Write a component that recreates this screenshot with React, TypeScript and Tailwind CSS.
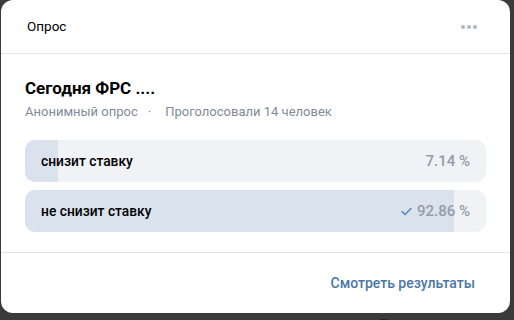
import React from "react";

function Option({ label, pct, fill, voted }: { label: string; pct: string; fill: number; voted?: boolean }) {
  return (
    <div className="relative h-[42px] rounded-[10px] bg-[#f0f2f5] overflow-hidden">
      <div className="absolute left-0 top-0 bottom-0 bg-[#dae2ed]" style={{ width: fill }} />
      <div className="relative h-full flex items-center justify-between pl-4 pr-4">
        <span className="text-[13.8px] font-medium text-black">{label}</span>
        <span className="flex items-center gap-[5px] text-[15px] font-medium text-[#939cab]">
          {voted && (
            <svg width="11" height="9" viewBox="0 0 11 9" fill="none">
              <path d="M1 4.5 L4 7.5 L10 1.5" stroke="#5181b8" strokeWidth="1.5" strokeLinecap="round" strokeLinejoin="round" />
            </svg>
          )}
          {pct}
        </span>
      </div>
    </div>
  );
}

export default function App() {
  return (
    <div className="w-[514px] h-[320px] bg-[#3a3a3a] overflow-hidden relative" style={{ fontFamily: "Roboto, 'Liberation Sans', sans-serif" }}>
      <div className="ml-[1px] w-[509px] h-[313px] bg-white rounded-[12px] flex flex-col">
        <div className="h-[54px] flex items-center justify-between pl-[26px] pr-[33px] border-b border-[#e1e5eb]">
          <span className="text-[13.5px] text-black">Опрос</span>
          <div className="flex gap-[2px]">
            <span className="w-[4px] h-[4px] rounded-full bg-[#aeb7c2]" />
            <span className="w-[4px] h-[4px] rounded-full bg-[#aeb7c2]" />
            <span className="w-[4px] h-[4px] rounded-full bg-[#aeb7c2]" />
          </div>
        </div>
        <div className="px-[24px] pt-[23px] pb-[20px] border-b border-[#e1e5eb]">
          <div className="text-[17px] font-bold text-black leading-[22px]">Сегодня ФРС ....</div>
          <div className="mt-[4px] text-[13px] text-[#818c99] leading-[18px] flex">
            <span>Анонимный опрос</span>
            <span className="ml-[10px] mr-[14px]">·</span>
            <span>Проголосовали 14 человек</span>
          </div>
          <div className="mt-[19px] flex flex-col gap-[8px]">
            <Option label="снизит ставку" pct="7.14 %" fill={33} />
            <Option label="не снизит ставку" pct="92.86 %" fill={429} voted />
          </div>
        </div>
        <div className="flex-1 flex items-center justify-end pr-[35px] pt-[1px]">
          <span className="text-[14px] font-medium" style={{ color: "#4a76a8" }}>Смотреть результаты</span>
        </div>
      </div>
      <div className="absolute left-[380px] top-[314px] text-[13px] text-[#222]">7 мая</div>
    </div>
  );
}
